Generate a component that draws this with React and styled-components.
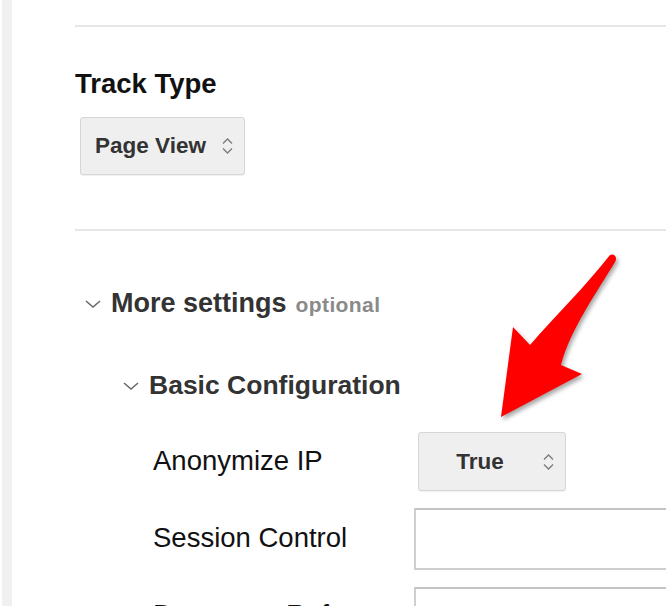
import React from "react";
import styled, { createGlobalStyle } from "styled-components";

const GlobalStyle = createGlobalStyle`
  body {
    margin: 0;
    background: #fff;
    font-family: "Liberation Sans", Arial, sans-serif;
  }
`;

const Page = styled.div`
  position: relative;
  display: flex;
  width: 666px;
  height: 606px;
  overflow: hidden;
  background: #fff;
`;

const Strip = styled.div`
  width: 10px;
  margin-left: 2px;
  background: #f0f0f0;
  flex-shrink: 0;
`;

const Main = styled.div`
  flex: 1;
  padding-left: 63px;
  display: flex;
  flex-direction: column;
  align-items: flex-start;

  & > * {
    flex-shrink: 0;
  }
`;

const Divider = styled.div`
  align-self: stretch;
  height: 2px;
  background: #e6e6e6;
  margin-top: ${(p) => p.$top}px;
`;

const Title = styled.div`
  margin-top: 41px;
  font-size: 27.5px;
  line-height: 31px;
  font-weight: 700;
  color: #111;
`;

const Select = styled.div`
  box-sizing: border-box;
  display: inline-flex;
  align-items: center;
  gap: 15px;
  height: ${(p) => p.$height || 58}px;
  width: ${(p) => (p.$width ? `${p.$width}px` : "auto")};
  margin-top: ${(p) => p.$top || 0}px;
  margin-left: ${(p) => p.$left || 0}px;
  padding: 0 10px 0 14px;
  background: #efefef;
  border: 1px solid #d6d6d6;
  border-radius: 3px;
  box-shadow: 0 1px 1px rgba(0, 0, 0, 0.06);
  font-size: 22.5px;
  font-weight: 700;
  color: #333;
`;

const SelectText = styled.span`
  flex: 1;
  text-align: center;
  white-space: nowrap;
`;

const Header = styled.div`
  display: flex;
  align-items: center;
  margin-top: ${(p) => p.$top}px;
  padding-left: ${(p) => p.$indent}px;
  font-size: ${(p) => p.$size}px;
  line-height: 31px;
  font-weight: 700;
  color: #333;
  white-space: nowrap;
`;

const Caret = styled.svg`
  width: 16px;
  height: 8px;
  margin-right: 10px;
  flex-shrink: 0;
`;

const Optional = styled.span`
  margin-left: 9px;
  font-size: 21px;
  letter-spacing: 0.4px;
  color: #8a8a8a;
  align-self: flex-end;
  line-height: 28px;
`;

const Rows = styled.div`
  margin-top: 31px;
  padding-left: 78px;
  display: flex;
  flex-direction: column;
  gap: 17px;
`;

const Row = styled.div`
  display: grid;
  grid-template-columns: 261px auto;
  align-items: start;
`;

const Label = styled.div`
  padding-top: ${(p) => p.$pad}px;
  font-size: 27.5px;
  line-height: 32px;
  color: #111;
  white-space: nowrap;
`;

const Input = styled.div`
  box-sizing: border-box;
  width: 300px;
  height: 62px;
  border: 2px solid #cfcfcf;
  border-top-color: #c4c4c4;
  background: #fff;
`;

const Arrow = styled.svg`
  position: absolute;
  top: 0;
  left: 0;
  pointer-events: none;
  filter: drop-shadow(2px 3px 2px rgba(0, 0, 0, 0.35));
`;

const UpDown = () => (
  <svg width="13" height="20" viewBox="0 0 13 20" fill="none">
    <path d="M2 7.5 L6.5 3 L11 7.5" stroke="#7a7a7a" strokeWidth="1.3" />
    <path d="M2 12.5 L6.5 17 L11 12.5" stroke="#7a7a7a" strokeWidth="1.3" />
  </svg>
);

const Chevron = () => (
  <Caret viewBox="0 0 16 8" fill="none">
    <path d="M1 1 L8 7 L15 1" stroke="#666" strokeWidth="1.5" />
  </Caret>
);

export default function App() {
  return (
    <>
      <GlobalStyle />
      <Page>
        <Strip />
        <Main>
          <Divider $top={25} />
          <Title>Track Type</Title>
          <Select $top={18} $left={5}>
            <SelectText>Page View</SelectText>
            <UpDown />
          </Select>
          <Divider $top={54} />
          <Header $top={57} $indent={10} $size={27}>
            <Chevron />
            More settings
            <Optional>optional</Optional>
          </Header>
          <Header $top={51} $indent={48} $size={26.5}>
            <Chevron />
            Basic Configuration
          </Header>
          <Rows>
            <Row>
              <Label $pad={13}>Anonymize IP</Label>
              <Select $left={4} $width={148} $height={59}>
                <SelectText>True</SelectText>
                <UpDown />
              </Select>
            </Row>
            <Row>
              <Label $pad={14}>Session Control</Label>
              <Input />
            </Row>
            <Row>
              <Label $pad={12}>Document Referrer</Label>
              <Input />
            </Row>
          </Rows>
        </Main>
        <Arrow width="666" height="606" viewBox="0 0 666 606">
          <path
            d="M610 255 C614 253, 618 257, 615 262 C597 292, 570 330, 561 365 L582 374 L501 417 L513 327 L530 345 C556 315, 585 287, 610 255 Z"
            fill="#ff0000"
          />
        </Arrow>
      </Page>
    </>
  );
}
